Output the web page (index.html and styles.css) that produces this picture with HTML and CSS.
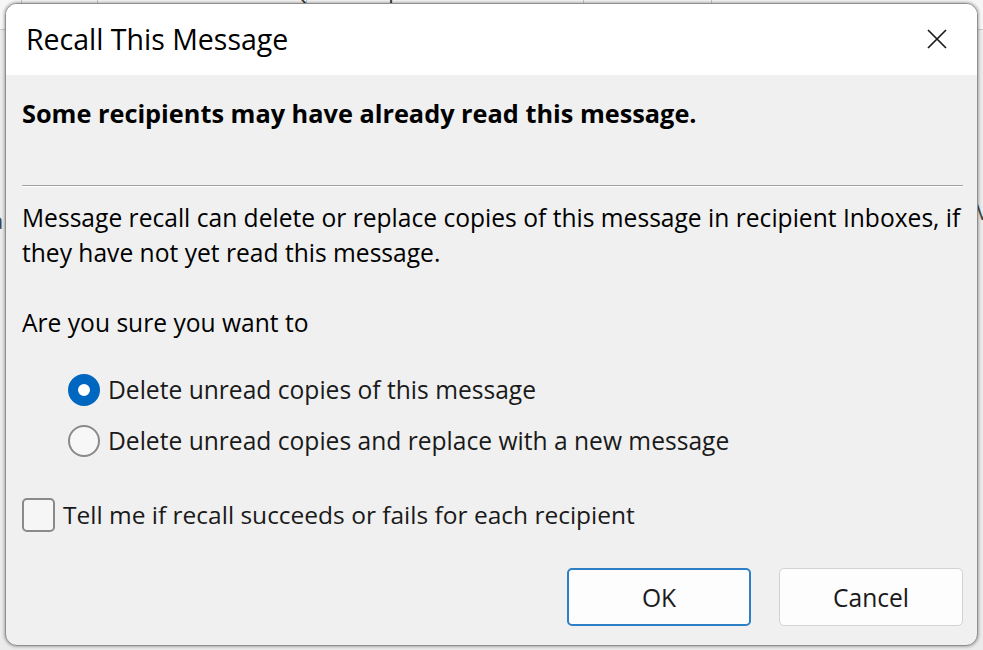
FILE: index.html
```html
<!DOCTYPE html>
<html lang="en">
<head>
<meta charset="utf-8">
<title>Recall This Message</title>
<link rel="stylesheet" href="styles.css">
</head>
<body>
<div class="desktop">
  <div class="ribbon">
    <span class="rb-text rb-1">Actis</span>
    <span class="rb-text rb-2">Quick Steps</span>
    <span class="rb-text rb-3">R</span>
    <span class="rb-sep s1"></span>
    <span class="rb-sep s2"></span>
    <span class="rb-sep s3"></span>
    <span class="rb-sep s4"></span>
    <span class="rb-sep s5"></span>
  </div>
  <span class="side-glyph left">a</span>
  <span class="side-glyph right">V</span>

  <div class="dialog">
    <div class="titlebar">
      <span class="title">Recall This Message</span>
      <span class="close" aria-label="Close">
        <svg width="20" height="20" viewBox="0 0 20 20"><path d="M1 1 L19 19 M19 1 L1 19" stroke="#1a1a1a" stroke-width="1.7" fill="none"/></svg>
      </span>
    </div>
    <div class="body">
      <p class="heading">Some recipients may have already read this message.</p>
      <hr class="sep">
      <p class="info">Message recall can delete or replace copies of this message in recipient Inboxes, if<br>they have not yet read this message.</p>
      <p class="question">Are you sure you want to</p>
      <div class="options">
        <label class="option"><span class="radio checked"></span><span>Delete unread copies of this message</span></label>
        <label class="option"><span class="radio"></span><span>Delete unread copies and replace with a new message</span></label>
      </div>
      <label class="check-row"><span class="checkbox"></span><span>Tell me if recall succeeds or fails for each recipient</span></label>
      <div class="buttons">
        <button class="btn primary">OK</button>
        <button class="btn">Cancel</button>
      </div>
    </div>
  </div>
</div>
</body>
</html>
```
FILE: styles.css
```css
* { box-sizing: border-box; }
html, body { margin: 0; padding: 0; }
body {
  width: 983px;
  height: 650px;
  overflow: hidden;
  font-family: "Open Sans", "Noto Sans", sans-serif;
  color: #000;
}
.desktop {
  position: relative;
  width: 983px;
  height: 650px;
  background: #ebebeb;
  overflow: hidden;
}
.ribbon {
  position: absolute;
  left: 0; top: 0; right: 0;
  height: 30px;
  background: #f6f6f6;
  border-bottom: 1px solid #c8c8c8;
}
.rb-text {
  position: absolute;
  top: -24px;
  font-size: 22px;
  color: #333;
}
.rb-1 { left: 44px; }
.rb-2 { left: 292px; }
.rb-3 { left: 544px; }
.rb-sep { position: absolute; top: 0; width: 1px; height: 30px; background: #c8c8c8; }
.s1 { left: 21px; }
.s2 { left: 97px; }
.s3 { left: 306px; }
.s4 { left: 583px; }
.s5 { left: 711px; }
.side-glyph {
  position: absolute;
  font-size: 22px;
  color: #444;
}
.side-glyph.left { left: -9px; top: 205px; }
.side-glyph.right { left: 976px; top: 196px; }

.dialog {
  position: absolute;
  left: 5px;
  top: 3px;
  width: 973px;
  height: 643px;
  border: 1px solid #8f8f8f;
  border-radius: 12px;
  overflow: hidden;
  background: #f0f0f0;
  box-shadow: 0 0 3px 1px rgba(0,0,0,0.28);
  display: flex;
  flex-direction: column;
}
.titlebar {
  height: 71px;
  flex: none;
  background: #fff;
  display: flex;
  align-items: center;
  justify-content: space-between;
  padding: 0 30px 0 20px;
}
.title {
  font-size: 28.5px;
  line-height: 36px;
  color: #000;
  margin-top: -2px;
}
.close {
  width: 20px;
  height: 20px;
  display: flex;
  margin-top: -2px;
}
.body {
  flex: 1;
  padding: 0 14px 0 16px;
  display: flex;
  flex-direction: column;
}
.heading {
  margin: 21px 0 0;
  font-weight: 700;
  font-size: 25.3px;
  line-height: 34px;
}
.sep {
  margin: 55px 0 0;
  border: 0;
  height: 2px;
  border-top: 1px solid #a0a0a0;
  border-bottom: 1px solid #ffffff;
  background: transparent;
}
.info {
  margin: 13px 0 0;
  font-size: 24.6px;
  line-height: 35px;
}
.question {
  margin: 35px 0 0;
  font-size: 24.6px;
  line-height: 35px;
}
.options {
  margin: 33px 0 0 46px;
  display: flex;
  flex-direction: column;
  gap: 17px;
}
.option, .check-row {
  display: flex;
  align-items: center;
  gap: 8px;
  font-size: 24.6px;
  color: #1a1a1a;
  line-height: 34px;
  height: 34px;
}
.radio {
  width: 32px;
  height: 32px;
  border-radius: 50%;
  border: 2px solid #8a8a8a;
  background: #f7f7f7;
  flex: none;
}
.radio.checked {
  border: 10px solid #0067c0;
  background: #fff;
}
.check-row {
  margin-top: 40px;
  font-size: 24.5px;
}
.checkbox {
  width: 33px;
  height: 34px;
  border: 2px solid #8a8a8a;
  border-radius: 5px;
  background: #f6f6f6;
  flex: none;
}
.buttons {
  margin-top: 36px;
  display: flex;
  justify-content: flex-end;
  gap: 28px;
}
.btn {
  width: 184px;
  height: 58px;
  background: #fdfdfd;
  border: 1px solid #d2d2d2;
  border-radius: 5px;
  font-family: inherit;
  font-size: 24.6px;
  color: #1a1a1a;
  padding: 0;
}
.btn.primary {
  border: 2px solid #2f7fc6;
  background: #fdfdfd;
}
```
